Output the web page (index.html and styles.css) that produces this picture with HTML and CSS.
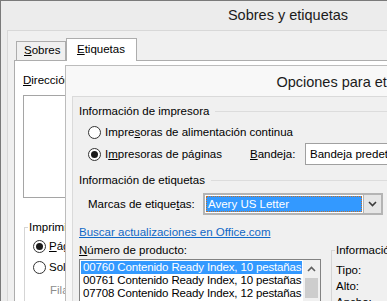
FILE: index.html
```html
<!DOCTYPE html>
<html lang="es">
<head>
  <meta charset="UTF-8">
  <title>Sobres y etiquetas</title>
  <link rel="stylesheet" href="styles.css">
</head>
<body>
  <div class="window">
    <div class="titlebar">Sobres y etiquetas</div>
    <div class="client">
      <div class="tabs">
        <div class="tab"><u>S</u>obres</div>
        <div class="tab active"><u>E</u>tiquetas</div>
      </div>
      <div class="tabpanel">
        <div class="field-label"><u>D</u>irección:</div>
        <div class="address"></div>
        <fieldset class="print-group">
          <legend>Imprimir</legend>
          <label class="radio first"><span class="dot checked"></span><u>P</u>ágina completa con la misma etiqueta</label>
          <label class="radio"><span class="dot"></span>Sol<u>o</u> una etiqueta</label>
          <div class="rowcol">Fila:</div>
        </fieldset>
      </div>
    </div>

    <div class="dialog">
      <div class="dialog-title">Opciones para etiquetas</div>
      <div class="dialog-client">
        <div class="section-head">Información de impresora</div>
        <label class="radio opt"><span class="dot"></span>Impre<u>s</u>oras de alimentación continua</label>
        <div class="opt-row">
          <label class="radio"><span class="dot checked"></span>I<u>m</u>presoras de páginas</label>
          <span class="tray-label"><u>B</u>andeja:</span>
          <div class="select">Bandeja predeterminada (Selección automática)</div>
        </div>
        <div class="section-head">Información de etiquetas</div>
        <div class="brand-row">
          <span class="brand-label">Marcas de etique<u>t</u>as:</span>
          <div class="combo">
            <div class="combo-field"><span class="combo-sel">Avery US Letter</span></div>
            <div class="combo-btn">
              <svg width="9" height="6" viewBox="0 0 9 6"><polyline points="1,1 4.5,4.5 8,1" fill="none" stroke="#3c3c3c" stroke-width="1.6"/></svg>
            </div>
          </div>
        </div>
        <a class="link" href="#">Buscar actualizaciones en Office.com</a>
        <div class="product">
          <div class="product-col">
            <div class="lbl"><u>N</u>úmero de producto:</div>
            <div class="listbox">
              <div class="items">
                <div class="item selected">00760 Contenido Ready Index, 10 pestañas</div>
                <div class="item">00761 Contenido Ready Index, 10 pestañas</div>
                <div class="item">07708 Contenido Ready Index, 12 pestañas</div>
                <div class="item">07709 Contenido Ready Index, 12 pestañas</div>
              </div>
              <div class="scrollbar">
                <div class="sb-btn">
                  <svg width="9" height="6" viewBox="0 0 9 6"><polyline points="1,5 4.5,1.5 8,5" fill="none" stroke="#606060" stroke-width="1.6"/></svg>
                </div>
                <div class="thumb"></div>
              </div>
            </div>
          </div>
          <fieldset class="info-group">
            <legend>Información de etiqueta</legend>
            <div class="info-row first">Tipo:</div>
            <div class="info-row">Alto:</div>
            <div class="info-row">Ancho:</div>
          </fieldset>
        </div>
      </div>
    </div>
  </div>
</body>
</html>
```

FILE: styles.css
```css
html, body { margin:0; height:301px; overflow:hidden; }
body { font-family:"Liberation Sans", Arial, sans-serif; font-size:11.5px; color:#000; background:#f0f0f0; }
u { text-decoration:underline; }

/* outer window */
.window { position:relative; width:574px; height:330px; background:#ececec; border-left:1px solid #7a7a7a; border-top:1px solid #7a7a7a; }
.titlebar { height:29px; line-height:29px; text-align:center; font-size:14.5px; color:#1b1b1b; }
.client { margin-left:6px; height:300px; background:#f0f0f0; border-left:1px solid #d8d8d8; border-top:1px solid #d8d8d8; padding-top:7px; }

.tabs { display:flex; align-items:flex-end; height:22px; margin-left:8px; }
.tab { box-sizing:border-box; width:50px; height:19px; border:1px solid #adadad; border-bottom:none; background:#f0f0f0; padding-left:7px; line-height:17px; }
.tab.active { position:relative; z-index:1; width:71px; height:23px; margin-bottom:-1px; background:#fff; padding-left:10px; line-height:20px; }
.tabpanel { margin-left:6px; height:260px; background:#fff; border-left:1px solid #adadad; border-top:1px solid #adadad; padding:11px 0 0 8px; }
.field-label { line-height:16px; }
.address { box-sizing:border-box; width:200px; height:103px; margin-top:7px; border:1px solid #a5a5a5; background:#fff; }

.print-group { box-sizing:border-box; width:300px; height:100px; margin:21px 0 0 1px; padding:0; border:1px solid #d5d5d5; }
.print-group legend { margin-left:3px; padding:0 1px; line-height:16px; }
.print-group .radio { margin:5px 0 0 8px; }
.print-group .radio.first { margin-top:3px; }
.print-group .radio .dot { margin-right:3px; }
.rowcol { margin:7px 0 0 25px; line-height:16px; color:#8d8d8d; }

.radio { display:flex; align-items:center; line-height:16px; white-space:nowrap; }
.dot { box-sizing:border-box; flex:none; display:flex; align-items:center; justify-content:center; width:13px; height:13px; margin-right:4px; border:1px solid #333; border-radius:50%; background:#fff; }
.dot.checked::after { content:''; width:7px; height:7px; border-radius:50%; background:#1a1a1a; }

/* label options dialog */
.dialog { position:absolute; left:64px; top:64px; box-sizing:border-box; width:580px; height:300px; background:#f8f8f8; border:1px solid #bcbcbc; }
.dialog-title { height:30px; line-height:32px; text-align:center; font-size:14.5px; color:#1b1b1b; }
.dialog-client { height:300px; margin-left:6px; padding-left:6px; background:#f0f0f0; border-left:1px solid #dadada; border-top:1px solid #dadada; }

.section-head { display:flex; align-items:center; margin-top:6px; line-height:16px; white-space:nowrap; }
.section-head::after { content:''; flex:1; margin-left:6px; border-top:1px solid #dcdcdc; }
.section-head + .brand-row { margin-top:5px; }
.opt { margin:5px 0 0 9px; }
.opt-row { display:flex; align-items:center; height:22px; margin:3px 0 7px 9px; }
.opt-row .radio { width:162px; }
.tray-label { width:55px; }
.select { box-sizing:border-box; width:300px; height:22px; padding-left:4px; line-height:20px; border:1px solid #a0a0a0; background:#fff; white-space:nowrap; overflow:hidden; }
.opt-row + .section-head { margin-top:7px; }

.brand-row { display:flex; align-items:center; height:22px; margin-left:9px; }
.brand-label { width:115px; }
.combo { box-sizing:border-box; display:flex; width:180px; height:22px; border:2px solid #b4b4b4; background:#fff; }
.combo-field { flex:1; padding:1px; }
.combo-sel { box-sizing:border-box; display:block; height:100%; padding-left:1px; line-height:14px; background:#3399ff; color:#fff; border:1px dotted #c0702c; }
.combo-btn { width:17px; display:flex; align-items:center; justify-content:center; background:#e6e6e6; border-left:1px solid #b4b4b4; }

.link { display:block; margin-top:9px; line-height:16px; color:#1068c6; text-decoration:underline; }

.product { display:flex; margin-top:2px; }
.product-col { width:242px; }
.lbl { line-height:16px; }
.listbox { box-sizing:border-box; display:flex; width:242px; height:80px; margin-top:1px; border:1px solid #828282; background:#fff; }
.items { flex:1; min-width:0; padding:1px 1px 0; overflow:hidden; }
.item { height:13px; line-height:13px; padding-left:2px; white-space:nowrap; overflow:hidden; letter-spacing:-0.15px; }
.item.selected { background:#3399ff; color:#fff; }
.scrollbar { width:17px; display:flex; flex-direction:column; align-items:center; background:#f0f0f0; }
.sb-btn { height:17px; display:flex; align-items:center; justify-content:center; }
.thumb { width:13px; height:20px; margin-top:1px; background:#cdcdcd; }

.info-group { box-sizing:border-box; width:200px; height:100px; margin:0 0 0 10px; padding:0; border:1px solid #d5d5d5; }
.info-group legend { margin-left:3px; padding:0 1px; line-height:16px; white-space:nowrap; }
.info-row { margin-left:4px; line-height:16px; }
.info-row.first { margin-top:4px; }
```
